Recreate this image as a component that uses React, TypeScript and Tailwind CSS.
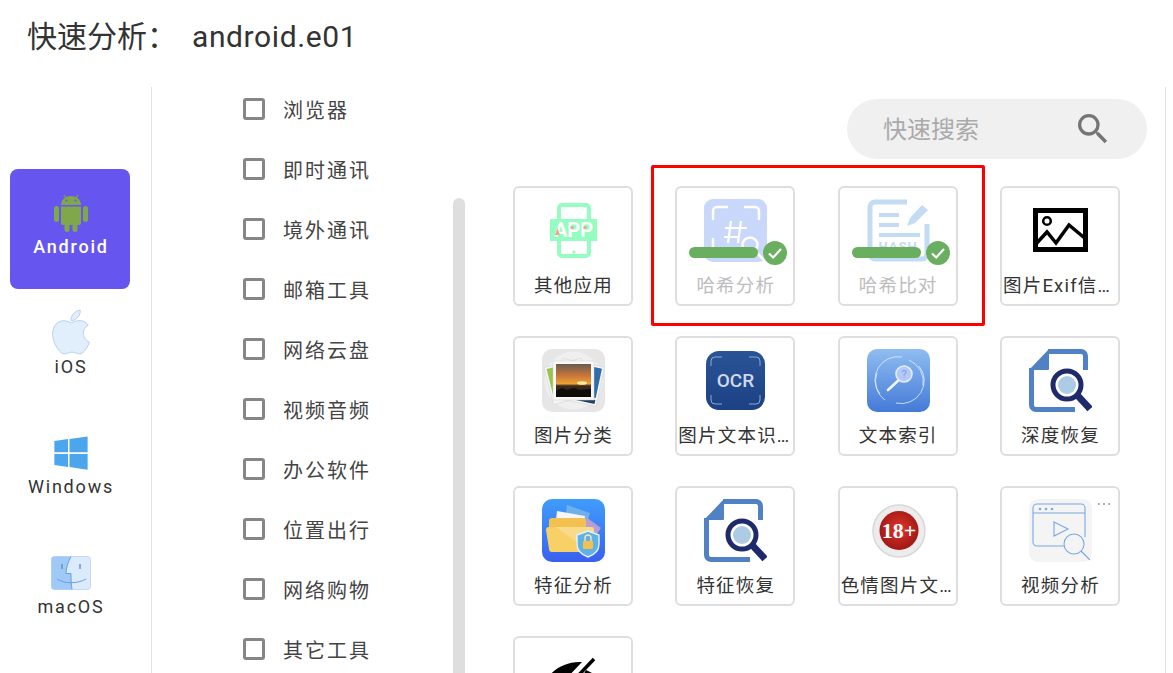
import type { ReactNode } from 'react'
import { FaApple, FaWindows } from 'react-icons/fa'

const categories = ['浏览器', '即时通讯', '境外通讯', '邮箱工具', '网络云盘', '视频音频', '办公软件', '位置出行', '网络购物', '其它工具']

function AndroidIcon() {
  return (
    <svg viewBox="0 0 34 38" className="ml-[2px] h-[38px] w-[34px] fill-[#7fa84a]">
      <path d="M7 11c0-5 4-9 10-9s10 4 10 9z" />
      <path d="M10 1l3 4M24 1l-3 4" stroke="#7fa84a" strokeWidth="1.2" />
      <circle cx="12.500" cy="6.500" r="1.100" fill="#6655ee" />
      <circle cx="21.500" cy="6.500" r="1.100" fill="#6655ee" />
      <path d="M7 12.500h20V29a2 2 0 0 1-2 2H9a2 2 0 0 1-2-2z" />
      <rect x="0" y="12" width="5" height="16" rx="2.500" />
      <rect x="29" y="12" width="5" height="16" rx="2.500" />
      <rect x="10.500" y="28" width="5" height="10" rx="2.500" />
      <rect x="18.500" y="28" width="5" height="10" rx="2.500" />
    </svg>
  )
}

function AppIcon() {
  return (
    <svg viewBox="0 0 63 63" className="h-[63px] w-[63px]">
      <rect x="17" y="6" width="30" height="51" rx="3" fill="none" stroke="#94fdc0" strokeWidth="4" />
      <rect x="8" y="20" width="47" height="22" fill="#94fdc0" />
      <circle cx="32" cy="53" r="1.600" fill="#94fdc0" />
      <text x="31.500" y="38" textAnchor="middle" fontSize="20" fontWeight="700" fill="#fff" fontFamily="Roboto, sans-serif">APP</text>
      <path d="M13 36l2.500-7 2.500 7z" fill="#f3a58f" />
      <circle cx="30" cy="28.500" r="1.800" fill="#f3a58f" />
      <circle cx="43" cy="28.500" r="1.800" fill="#f3a58f" />
    </svg>
  )
}

function HashIcon() {
  return (
    <svg viewBox="0 0 63 63" className="h-[63px] w-[63px]">
      <rect width="63" height="63" rx="9" fill="#c9d7fb" />
      <path d="M9 20V12a4 4 0 0 1 4-4h10M41 8h10a4 4 0 0 1 4 4v8M9 40v12" fill="none" stroke="#fff" strokeWidth="2.500" strokeLinecap="round" />
      <path d="M27 22l-3 22M37 22l-3 22M21 29h22M20 38h14" stroke="#fff" strokeWidth="2.200" fill="none" />
      <circle cx="46" cy="46" r="7.500" fill="none" stroke="#fff" strokeWidth="2.500" />
      <path d="M51 52l9 9" stroke="#fff" strokeWidth="2.500" />
    </svg>
  )
}

function HashCompareIcon() {
  return (
    <svg viewBox="0 0 63 63" className="h-[63px] w-[63px]">
      <path d="M40 3H8a5 5 0 0 0-5 5v47a5 5 0 0 0 5 5h47a5 5 0 0 0 5-5V25" fill="none" stroke="#c3dcf3" strokeWidth="5" />
      <path d="M12 16h20M12 26h20M12 36h41" stroke="#c3dcf3" strokeWidth="4" />
      <path d="M40 27l3-8 12-13 6 5-13 13z" fill="#c3dcf3" />
      <text x="31" y="52" textAnchor="middle" fontSize="13" fontWeight="700" letterSpacing="1" fill="#c3dcf3" fontFamily="Roboto, sans-serif">HASH</text>
    </svg>
  )
}

function ExifIcon() {
  return (
    <svg viewBox="0 0 63 63" className="h-[63px] w-[63px]">
      <rect x="6.500" y="11.500" width="50" height="39" fill="none" stroke="#000" strokeWidth="5" />
      <circle cx="18" cy="22" r="3.800" fill="none" stroke="#000" strokeWidth="2.500" />
      <path d="M6 46l12-13 9 11 13-18 18 15" fill="none" stroke="#000" strokeWidth="3.500" />
    </svg>
  )
}

function PhotosIcon() {
  return (
    <svg viewBox="0 0 63 63" className="h-[63px] w-[63px]">
      <defs>
        <linearGradient id="sunset" x1="0" y1="0" x2="0" y2="1">
          <stop offset="0" stopColor="#6a5b50" />
          <stop offset="0.35" stopColor="#c8763a" />
          <stop offset="0.6" stopColor="#f0a030" />
          <stop offset="0.66" stopColor="#3c2c20" />
          <stop offset="1" stopColor="#1c1612" />
        </linearGradient>
      </defs>
      <rect width="63" height="63" rx="10" fill="#e6e6e6" />
      <circle cx="31.500" cy="31.500" r="29" fill="#efefef" />
      <g transform="rotate(-14 31 31)">
        <rect x="6" y="12" width="38" height="38" fill="#f6f6f6" stroke="#cfcfcf" strokeWidth="0.500" />
        <rect x="8" y="14" width="10" height="26" fill="#9cc24e" />
      </g>
      <g transform="rotate(12 31 31)">
        <rect x="17" y="12" width="42" height="40" fill="#f6f6f6" stroke="#cfcfcf" strokeWidth="0.500" />
        <rect x="49" y="14" width="8" height="30" fill="#2f6cab" />
        <rect x="19" y="46" width="38" height="4" fill="#22405f" />
      </g>
      <rect x="11" y="12" width="41" height="39" fill="#f8f8f8" stroke="#d0d0d0" strokeWidth="0.500" />
      <rect x="14" y="15" width="35" height="33" fill="url(#sunset)" />
      <ellipse cx="40" cy="34" rx="5" ry="1.800" fill="#fde8a0" />
      <path d="M14 42l6-3 5 2 7-2 6 2 11-1v8H14z" fill="#100c0a" />
    </svg>
  )
}

function OcrIcon() {
  return (
    <svg viewBox="0 0 63 63" className="h-[63px] w-[63px]">
      <defs>
        <linearGradient id="ocr" x1="0" y1="0" x2="0" y2="1">
          <stop offset="0" stopColor="#2a5496" />
          <stop offset="1" stopColor="#1c4184" />
        </linearGradient>
      </defs>
      <rect x="2" y="2" width="59" height="59" rx="13" fill="url(#ocr)" />
      <path d="M7 17v-5a4 4 0 0 1 4-4h7M45 8h7a4 4 0 0 1 4 4v5M7 46v5a4 4 0 0 0 4 4h7M45 55h7a4 4 0 0 0 4-4v-5" fill="none" stroke="#8fa9d0" strokeWidth="1" />
      <text x="31.500" y="38" textAnchor="middle" fontSize="19" fontWeight="500" fill="#cfd9ea" fontFamily="Roboto, sans-serif">OCR</text>
    </svg>
  )
}

function TextIndexIcon() {
  return (
    <svg viewBox="0 0 63 63" className="h-[63px] w-[63px]">
      <defs>
        <linearGradient id="idx" x1="0" y1="0" x2="0" y2="1">
          <stop offset="0" stopColor="#8fbdf1" />
          <stop offset="1" stopColor="#447ad8" />
        </linearGradient>
      </defs>
      <rect width="63" height="63" rx="10" fill="url(#idx)" />
      <path d="M13 45a23 23 0 0 1 22-37M52 17a23 23 0 0 1-23 37" fill="none" stroke="#e4eefb" strokeWidth="0.800" />
      <path d="M10 24a23 23 0 0 0 8 27M42 11a24 24 0 0 1 14 26" fill="none" stroke="#e4eefb" strokeWidth="0.800" />
      <path d="M21 41l13-12" stroke="#f4f4f4" strokeWidth="2.600" strokeLinecap="round" />
      <circle cx="37" cy="25" r="8" fill="#b3c9f8" stroke="#e4ecfb" strokeWidth="1.600" />
      <text x="37" y="29" textAnchor="middle" fontSize="11" fill="#7f9ee8" fontFamily="Roboto, sans-serif">?</text>
    </svg>
  )
}

function RecoverIcon() {
  return (
    <svg viewBox="0 0 63 63" className="h-[63px] w-[63px]">
      <path d="M19 2.500h33a4.500 4.500 0 0 1 4.500 4.500v14M46 60.500H7a4.500 4.500 0 0 1-4.500-4.500V19" fill="none" stroke="#4f81c4" strokeWidth="5" />
      <path d="M20 0v20a1 1 0 0 1-1 1H0z" fill="#4f81c4" />
      <circle cx="38" cy="36" r="14" fill="#fff" stroke="#1f2a6b" strokeWidth="5" />
      <circle cx="38" cy="36" r="9" fill="#aecbe6" />
      <path d="M49 47l12 13" stroke="#1f2a6b" strokeWidth="7" />
    </svg>
  )
}

function FeatureIcon() {
  return (
    <svg viewBox="0 0 63 63" className="h-[63px] w-[63px]">
      <defs>
        <linearGradient id="feat" x1="0" y1="0" x2="0" y2="1">
          <stop offset="0" stopColor="#3f9dfb" />
          <stop offset="1" stopColor="#3a60ee" />
        </linearGradient>
      </defs>
      <rect width="63" height="63" rx="10" fill="url(#feat)" />
      <path d="M25 6l23 8-6 20-20-6z" fill="#6fb0e8" />
      <path d="M15 12l28 5-3 18-27-5z" fill="#f4f6fb" />
      <path d="M44 18l15 11-8 12-14-10z" fill="#b79fd6" />
      <rect x="7" y="19" width="37" height="20" rx="3" fill="#f3c14f" />
      <path d="M4 31a3 3 0 0 1 3-3h42a3 3 0 0 1 3 3v19a3 3 0 0 1-3 3H10a3 3 0 0 1-3-3z" fill="#f9d068" />
      <path d="M14 28h35a3 3 0 0 1 3 3v19l-4 3z" fill="#f9d98a" />
      <path d="M46 32l11 4v9c0 7-5 11-11 13-6-2-11-6-11-13v-9z" fill="#5fb1e6" stroke="#e6f2fb" strokeWidth="1.400" />
      <rect x="41" y="42" width="10" height="8" rx="1" fill="#f3c14f" />
      <path d="M43 42v-3a3 3 0 0 1 6 0v3" fill="none" stroke="#f3e6b8" strokeWidth="1.400" />
    </svg>
  )
}

function AdultIcon() {
  return (
    <svg viewBox="0 0 63 63" className="h-[63px] w-[63px]">
      <defs>
        <radialGradient id="red" cx="0.5" cy="0.45" r="0.6">
          <stop offset="0" stopColor="#e0352b" />
          <stop offset="1" stopColor="#981512" />
        </radialGradient>
      </defs>
      <circle cx="32" cy="32" r="26" fill="#ececec" stroke="#d8d8d8" strokeWidth="1.500" />
      <circle cx="32" cy="31.500" r="19.500" fill="url(#red)" />
      <text x="32" y="39" textAnchor="middle" fontSize="22" fontWeight="700" fill="#fff" fontFamily="'Liberation Serif', serif">18+</text>
    </svg>
  )
}

function VideoIcon() {
  return (
    <svg viewBox="0 0 63 63" className="h-[63px] w-[63px]">
      <rect width="63" height="63" rx="9" fill="#f4f4f4" />
      <path d="M35 47H8a4 4 0 0 1-4-4V9a4 4 0 0 1 4-4h44a4 4 0 0 1 4 4v29M4 14h52" fill="none" stroke="#7ba8e0" strokeWidth="1.100" />
      <circle cx="11" cy="10" r="1.300" fill="#7ba8e0" />
      <circle cx="17" cy="10" r="1.300" fill="#7ba8e0" />
      <circle cx="23" cy="10" r="1.300" fill="#7ba8e0" />
      <path d="M25 23l14 7-14 7z" fill="none" stroke="#7ba8e0" strokeWidth="1.100" />
      <circle cx="45" cy="45" r="10" fill="#f4f4f4" stroke="#7ba8e0" strokeWidth="1.100" />
      <path d="M52 52l9 9" stroke="#7ba8e0" strokeWidth="1.100" />
    </svg>
  )
}

function EyeOffIcon() {
  return (
    <svg viewBox="0 0 63 63" className="h-[63px] w-[63px]">
      <path d="M2 34C10 20 24 12 40 13L22 32c-3 3-3 8-2 12-7-2-13-6-18-10z" />
      <path d="M52 10L14 50" stroke="#000" strokeWidth="3.500" />
      <path d="M44 21c7 3 13 7 18 13-5 7-12 12-20 15-6 1-10 1-14 0z" />
    </svg>
  )
}

function FinderIcon() {
  return (
    <svg viewBox="0 0 40 34" className="h-[34px] w-[40px]">
      <rect x="0.500" y="0.500" width="39" height="33" rx="3" fill="#dcebfb" stroke="#c0d9f5" />
      <path d="M3 .5h17c-3 6-5 11-5 17h5c0 5 0 10 1 16H3a2.500 2.500 0 0 1-2.500-2.500V3A2.500 2.500 0 0 1 3 .5z" fill="#9fc9f7" />
      <path d="M20 .5c-3 6-5 11-5 17h5c0 5 0 10 1 16" fill="none" stroke="#6d9fd8" strokeWidth="1" />
      <path d="M11 8v5M29 8v5" stroke="#5c8fca" strokeWidth="1.400" />
      <path d="M6 23c8 5 20 5 29 0" fill="none" stroke="#6d9fd8" strokeWidth="1" />
    </svg>
  )
}

function Card({ label, icon, done, more }: { label: string; icon: ReactNode; done?: boolean; more?: boolean }) {
  return (
    <div className="relative flex h-[120px] w-[120px] flex-col items-center rounded-md border-2 border-[#dedede] bg-white pt-[11px]">
      <div className="pl-[1px]">{icon}</div>
      <div className={`mt-[11px] w-full truncate pl-[1px] text-center text-[18.500px] leading-[26px] tracking-[1.200px] ${done ? 'text-[#bdbdbd]' : 'text-[#333]'}`}>
        {label}
      </div>
      {done && (
        <>
          <div className="absolute left-[12px] top-[59px] h-[11px] w-[69px] rounded-full bg-[#6aaf5f]" />
          <div className="absolute left-[86px] top-[53px] flex h-6 w-6 items-center justify-center rounded-full bg-[#6aaf5f]">
            <svg viewBox="0 0 24 24" className="h-6 w-6">
              <path d="M6 12.500l4.200 4L18 8" fill="none" stroke="#fff" strokeWidth="2.200" />
            </svg>
          </div>
        </>
      )}
      {more && (
        <div className="absolute right-[8px] top-[15px] flex gap-[3px]">
          <span className="h-[2px] w-[2px] rounded-full bg-[#999]" />
          <span className="h-[2px] w-[2px] rounded-full bg-[#999]" />
          <span className="h-[2px] w-[2px] rounded-full bg-[#999]" />
        </div>
      )}
    </div>
  )
}

function PlatformTab({ label, icon, active }: { label: string; icon: ReactNode; active?: boolean }) {
  return (
    <div className={`relative h-[120px] w-[120px] rounded-lg ${active ? 'bg-[#6655ee] font-medium text-white' : 'text-[#333]'}`}>
      <div className="flex h-[66px] items-end justify-center">{icon}</div>
      <div className="absolute inset-x-0 top-[66px] pl-[2px] text-center text-[18px] leading-6 tracking-[1.800px]">{label}</div>
    </div>
  )
}

export default function App() {
  return (
    <div className="flex h-[673px] w-[1173px] flex-col overflow-hidden bg-white font-['Roboto','Noto_Sans_CJK_SC',sans-serif] text-[#333]">
      <div className="flex h-[80px] shrink-0 items-start px-[27px] pt-[13px] text-[30px] leading-[48px]">
        <span>快速分析：</span>
        <span className="ml-[15px] tracking-[0.600px]">android.e01</span>
      </div>

      <div className="flex flex-1">
        <div className="mt-[7px] flex w-[152px] shrink-0 flex-col border-r border-[#e2e2e2] pl-[10px] pt-[82px]">
          <PlatformTab active label="Android" icon={<div className="mb-[3px]"><AndroidIcon /></div>} />
          <PlatformTab label="iOS" icon={<FaApple className="mb-[-2px] ml-[2px] h-[50px] w-[50px] fill-[#e1effc] stroke-[#b5cfe8] stroke-[10px]" />} />
          <PlatformTab label="Windows" icon={<FaWindows className="mb-[3px] ml-[2px] h-[38px] w-[38px] text-[#4ba6ee]" />} />
          <PlatformTab label="macOS" icon={<div className="mb-[5px] ml-[2px]"><FinderIcon /></div>} />
        </div>

        <div className="flex w-[301px] shrink-0 flex-col pl-[91px]">
          {categories.map((name) => (
            <label key={name} className="flex h-[60px] shrink-0 items-center">
              <span className="mb-[2px] h-[22px] w-[22px] rounded-[3px] border-[3px] border-[#868686]" />
              <span className="ml-[18px] mt-[2px] text-[20px] tracking-[2px] text-[#444]">{name}</span>
            </label>
          ))}
        </div>

        <div className="mt-[118px] h-[500px] w-[12px] shrink-0 rounded-t-md bg-[#dedede]" />

        <div className="relative mt-[7px] flex h-[600px] w-[701px] shrink-0 flex-col border-r border-[#e2e2e2] pl-[48px]">
          <div className="mr-[18px] mt-[12px] flex h-[60px] w-[300px] shrink-0 items-center self-end rounded-full bg-[#f0f0f0] pl-[36px]">
            <span className="mt-[2px] text-[24px] text-[#aaa]">快速搜索</span>
            <svg viewBox="0 0 24 24" className="ml-[94px] h-[40px] w-[40px] fill-[#757575]">
              <path d="M15.5 14h-.79l-.28-.27A6.471 6.471 0 0 0 16 9.500 6.500 6.500 0 1 0 9.500 16c1.610 0 3.090-.59 4.230-1.570l.27.280v.790l5 4.990L20.490 19l-4.990-5zm-6 0C7.010 14 5 11.990 5 9.500S7.010 5 9.500 5 14 7.010 14 9.500 11.990 14 9.500 14z" />
            </svg>
          </div>

          <div className="mt-[27px] grid w-[607px] grid-cols-[repeat(4,120px)] justify-between gap-y-[30px]">
            <Card label="其他应用" icon={<AppIcon />} />
            <Card label="哈希分析" icon={<HashIcon />} done />
            <Card label="哈希比对" icon={<HashCompareIcon />} done />
            <Card label="图片Exif信息提取" icon={<ExifIcon />} />
            <Card label="图片分类" icon={<PhotosIcon />} />
            <Card label="图片文本识别" icon={<OcrIcon />} />
            <Card label="文本索引" icon={<TextIndexIcon />} />
            <Card label="深度恢复" icon={<RecoverIcon />} />
            <Card label="特征分析" icon={<FeatureIcon />} />
            <Card label="特征恢复" icon={<RecoverIcon />} />
            <Card label="色情图片文本" icon={<AdultIcon />} />
            <Card label="视频分析" icon={<VideoIcon />} more />
            <Card label="隐私" icon={<EyeOffIcon />} />
          </div>

          <div className="absolute left-[186px] top-[78px] h-[161px] w-[334px] rounded-[2px] border-[3px] border-[#ff0000]" />
        </div>
      </div>
    </div>
  )
}
